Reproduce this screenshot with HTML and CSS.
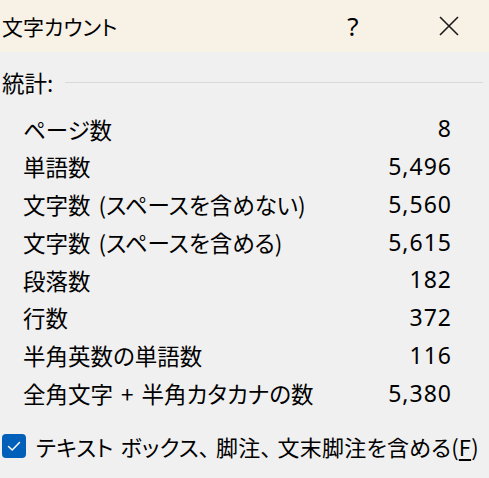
FILE: index.html
```html
<!DOCTYPE html>
<html lang="ja">
<head>
<meta charset="utf-8">
<title>文字カウント</title>
<link rel="stylesheet" href="styles.css">
</head>
<body>
<div class="dialog">
  <div class="titlebar">
    <span class="title">文字カウント</span>
    <span class="help">?</span>
    <span class="close">
      <svg width="20" height="20" viewBox="0 0 20 20"><path d="M1 1 L19 19 M19 1 L1 19" stroke="#1a1a1a" stroke-width="1.6" fill="none"/></svg>
    </span>
  </div>
  <div class="content">
    <div class="group-head">
      <span class="group-label">統計:</span>
      <span class="group-line"></span>
    </div>
    <div class="stats">
      <div class="row"><span class="label">ページ数</span><span class="value">8</span></div>
      <div class="row"><span class="label">単語数</span><span class="value">5,496</span></div>
      <div class="row"><span class="label">文字数 (スペースを含めない)</span><span class="value">5,560</span></div>
      <div class="row"><span class="label">文字数 (スペースを含める)</span><span class="value">5,615</span></div>
      <div class="row"><span class="label">段落数</span><span class="value">182</span></div>
      <div class="row"><span class="label">行数</span><span class="value">372</span></div>
      <div class="row"><span class="label">半角英数の単語数</span><span class="value">116</span></div>
      <div class="row"><span class="label">全角文字 + 半角カタカナの数</span><span class="value">5,380</span></div>
    </div>
    <label class="check">
      <span class="box"><svg width="24" height="24" viewBox="0 0 24 24"><path d="M6.5 12.5 L10.2 16 L17.5 8.5" stroke="#fff" stroke-width="1.5" fill="none" stroke-linecap="round" stroke-linejoin="round"/></svg></span>
      <span class="check-text">テキスト ボックス<span class="comma">、</span>脚注<span class="comma">、</span>文末脚注を含める(<u>F</u>)</span>
    </label>
  </div>
</div>
</body>
</html>
```
FILE: styles.css
```css
html, body {
  margin: 0;
  padding: 0;
}
body {
  width: 489px;
  height: 478px;
  background: #f0f0f0;
  font-family: "Noto Sans CJK JP", "Noto Sans", sans-serif;
  font-feature-settings: "palt";
  color: #000;
  overflow: hidden;
}
.dialog {
  display: flex;
  flex-direction: column;
}
.titlebar {
  height: 52px;
  background: #f8f1e6;
  display: flex;
  align-items: center;
  font-size: 21px;
  line-height: 1;
}
.title {
  padding-left: 2px;
  flex: 1;
}
.help {
  width: 20px;
  text-align: center;
  font-family: "Noto Sans", sans-serif;
  font-size: 26px;
  margin-right: 76px;
}
.close {
  width: 20px;
  height: 20px;
  margin-right: 30px;
  display: flex;
}
.content {
  display: flex;
  flex-direction: column;
  font-size: 22.5px;
  line-height: 1;
  word-spacing: 3px;
}
.group-head {
  height: 36px;
  margin-top: 12px;
  display: flex;
  align-items: center;
  padding-left: 2px;
  padding-right: 6px;
}
.group-label {
  margin-right: 12px;
}
.group-line {
  flex: 1;
  height: 1px;
  background: #d9d9d9;
}
.stats {
  margin-top: 10px;
  padding-left: 23px;
  padding-right: 38px;
  display: flex;
  flex-direction: column;
}
.row {
  height: 37.75px;
  display: flex;
  align-items: center;
  justify-content: space-between;
}
.value {
  font-family: "Noto Sans", sans-serif;
  font-size: 23px;
  letter-spacing: 1px;
  margin-right: -1px;
}
.check {
  margin-top: 16px;
  height: 36px;
  display: flex;
  align-items: center;
  padding-left: 2px;
  font-size: 22px;
  word-spacing: 2px;
}
.box {
  width: 24px;
  height: 24px;
  border-radius: 4px;
  background: #005fb8;
  display: flex;
  margin-right: 10px;
}
.check-text {
  letter-spacing: 0.2px;
}
.comma {
  margin-right: 6px;
}
.check-text u {
  text-underline-offset: 3px;
}
```
